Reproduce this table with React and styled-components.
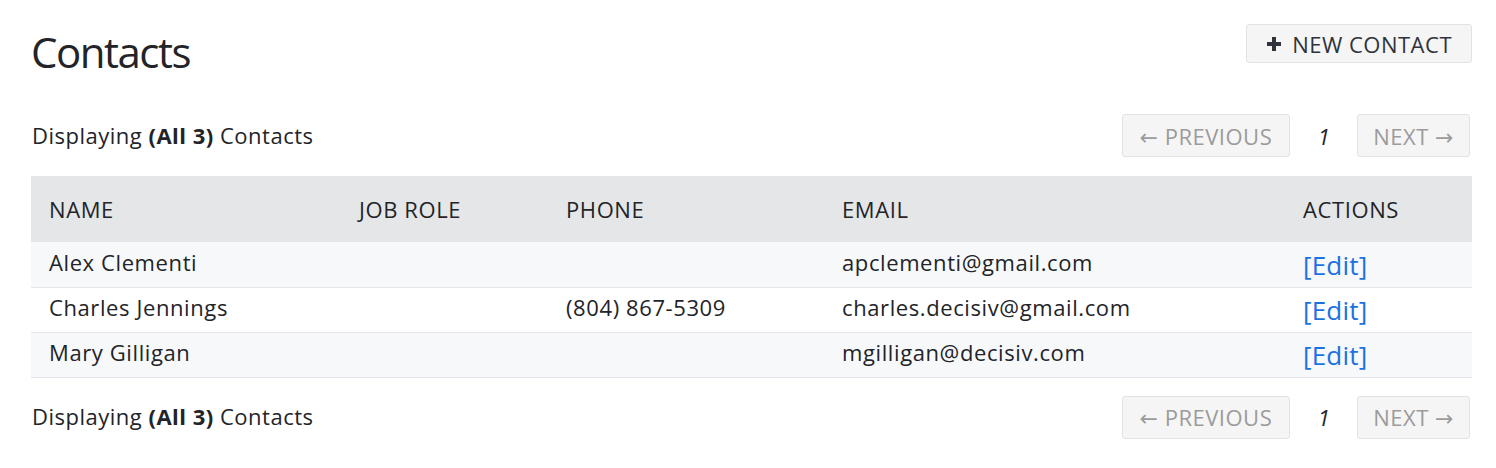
import React from "react";
import styled, { createGlobalStyle } from "styled-components";

const GlobalStyle = createGlobalStyle`
  body {
    margin: 0;
    background: #ffffff;
    font-family: "Open Sans", "DejaVu Sans", sans-serif;
    color: #222428;
  }
`;

const Page = styled.div`
  padding: 24px 24px 0 31px;
`;

const TopBar = styled.div`
  display: flex;
  justify-content: space-between;
  align-items: flex-start;
  height: 90px;
`;

const Title = styled.h1`
  margin: 5px 0 0 0;
  font-size: 42px;
  font-weight: 400;
  letter-spacing: -1.5px;
  line-height: 46px;
`;

const Button = styled.button`
  display: flex;
  align-items: center;
  gap: 10px;
  height: ${(p) => p.h || 43}px;
  padding: 0 ${(p) => p.px || 15}px;
  background: #f5f5f5;
  border: 1px solid #e2e2e2;
  border-radius: 3px;
  font-family: inherit;
  font-size: 22px;
  letter-spacing: 0.5px;
  color: ${(p) => (p.muted ? "#9b9b9b" : "#2f333b")};
  cursor: pointer;
`;

const PagerRow = styled.div`
  display: flex;
  justify-content: space-between;
  align-items: center;
  height: 43px;
  padding-right: 2px;
`;

const Summary = styled.div`
  font-size: 22px;
  letter-spacing: 0.5px;
  padding: 0 0 2px 1px;
  b {
    font-weight: 700;
  }
`;

const Pager = styled.div`
  display: flex;
  align-items: center;
`;

const PageNum = styled.span`
  width: 67px;
  text-align: center;
  font-size: 22px;
  font-style: italic;
`;

const Table = styled.table`
  width: 100%;
  border-collapse: collapse;
  table-layout: fixed;
  margin: 19px 0 18px;
`;

const Th = styled.th`
  box-sizing: border-box;
  width: ${(p) => (p.w ? `${p.w}px` : "auto")};
  height: 66px;
  padding: 0 18px;
  background: #e5e6e8;
  text-align: left;
  font-weight: 400;
  font-size: 22px;
  letter-spacing: 0.6px;
  text-transform: uppercase;
`;

const Row = styled.tr`
  background: ${(p) => (p.odd ? "#f7f8fa" : "#ffffff")};
  border-bottom: 1px solid #e3e5ea;
`;

const Td = styled.td`
  box-sizing: border-box;
  height: 45px;
  padding: 0 18px 5px;
  font-size: 22px;
  letter-spacing: 0.6px;
  white-space: nowrap;
  vertical-align: middle;
`;

const EditLink = styled.a`
  display: inline-block;
  padding-top: 7px;
  color: #1a72e0;
  font-size: 26px;
  line-height: 30px;
  letter-spacing: 0.2px;
  text-decoration: none;
  cursor: pointer;
`;

const PlusIcon = () => (
  <svg width="16" height="16" viewBox="0 0 16 16">
    <path d="M8 1v14M1 8h14" stroke="#2f333b" strokeWidth="4" />
  </svg>
);

const contacts = [
  { name: "Alex Clementi", role: "", phone: "", email: "apclementi@gmail.com" },
  { name: "Charles Jennings", role: "", phone: "(804) 867-5309", email: "charles.decisiv@gmail.com" },
  { name: "Mary Gilligan", role: "", phone: "", email: "mgilligan@decisiv.com" },
];

const Pagination = () => (
  <PagerRow>
    <Summary>
      Displaying <b>(All 3)</b> Contacts
    </Summary>
    <Pager>
      <Button muted px={17}>← PREVIOUS</Button>
      <PageNum>1</PageNum>
      <Button muted px={15}>NEXT →</Button>
    </Pager>
  </PagerRow>
);

export default function App() {
  return (
    <Page>
      <GlobalStyle />
      <TopBar>
        <Title>Contacts</Title>
        <Button h={39} px={19}>
          <PlusIcon />
          NEW CONTACT
        </Button>
      </TopBar>
      <Pagination />
      <Table>
        <thead>
          <tr>
            <Th w={310}>Name</Th>
            <Th w={207}>Job Role</Th>
            <Th w={276}>Phone</Th>
            <Th w={461}>Email</Th>
            <Th>Actions</Th>
          </tr>
        </thead>
        <tbody>
          {contacts.map((c, i) => (
            <Row key={c.email} odd={i % 2 === 0}>
              <Td>{c.name}</Td>
              <Td>{c.role}</Td>
              <Td>{c.phone}</Td>
              <Td>{c.email}</Td>
              <Td>
                <EditLink>[Edit]</EditLink>
              </Td>
            </Row>
          ))}
        </tbody>
      </Table>
      <Pagination />
    </Page>
  );
}
